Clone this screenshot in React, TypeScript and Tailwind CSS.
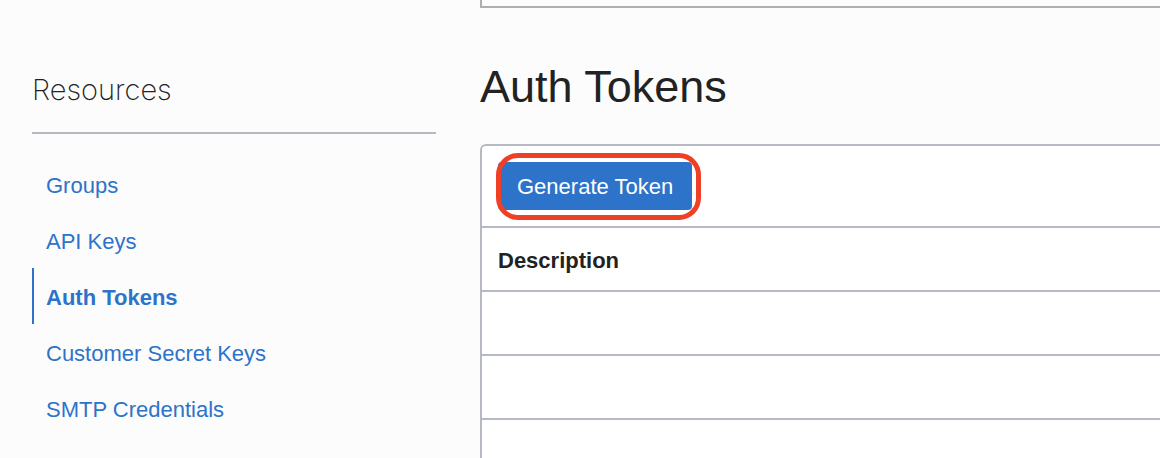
const resources = ["Groups", "API Keys", "Auth Tokens", "Customer Secret Keys", "SMTP Credentials"];
const current = "Auth Tokens";

function Sidebar() {
  return (
    <aside className="w-[404px] shrink-0 pt-[68px]">
      <h2 className="border-b-2 border-[#b5b9c1] pb-[20px] font-['Inter',sans-serif] text-[29px] leading-[44px] font-extralight">
        Resources
      </h2>
      <nav aria-label="Resources" className="pt-[22px]">
        <ul>
          {resources.map((name) => (
            <li key={name}>
              <a
                href="#"
                aria-current={name === current ? "page" : undefined}
                className={
                  name === current
                    ? "flex h-14 items-center border-l-2 border-[#2d73c9] pt-1 pl-3 font-bold text-[#2d73c9]"
                    : "flex h-14 items-center border-l-2 border-transparent pt-1 pl-3 text-[#2d73c9]"
                }
              >
                {name}
              </a>
            </li>
          ))}
        </ul>
      </nav>
    </aside>
  );
}

function TokenPanel() {
  return (
    <section className="rounded-tl-[6px] border-t-2 border-l-2 border-[#b5b9c1] bg-white">
      <div className="flex h-20 items-center px-4">
        <div className="relative">
          <button type="button" className="h-12 rounded-[4px] bg-[#2d73c9] px-[19px] pt-[2px] text-white">
            Generate Token
          </button>
          <span className="pointer-events-none absolute -top-[9px] -right-[9px] -bottom-[10px] -left-[2px] rounded-[22px] border-5 border-[#ee4024]" />
        </div>
      </div>
      <table className="w-full">
        <thead>
          <tr className="h-16 border-t-2 border-[#b5b9c1]">
            <th scope="col" className="px-4 pt-1 text-left font-bold">
              Description
            </th>
          </tr>
        </thead>
        <tbody>
          {[0, 1, 2].map((row) => (
            <tr key={row} className="h-16 border-t-2 border-[#b5b9c1]">
              <td />
            </tr>
          ))}
        </tbody>
      </table>
    </section>
  );
}

export default function App() {
  return (
    <div className="flex h-screen gap-11 overflow-hidden bg-[#fcfcfc] pl-8 font-['Liberation_Sans',Arial,sans-serif] text-[22px] leading-7 text-[#222222]">
      <Sidebar />
      <main className="min-w-0 flex-1">
        <div className="h-2 border-b-2 border-l-2 border-[#adafb1]" />
        <h1 className="pt-[53px] pb-[31px] text-[45px] leading-[52px]">Auth Tokens</h1>
        <TokenPanel />
      </main>
    </div>
  );
}
